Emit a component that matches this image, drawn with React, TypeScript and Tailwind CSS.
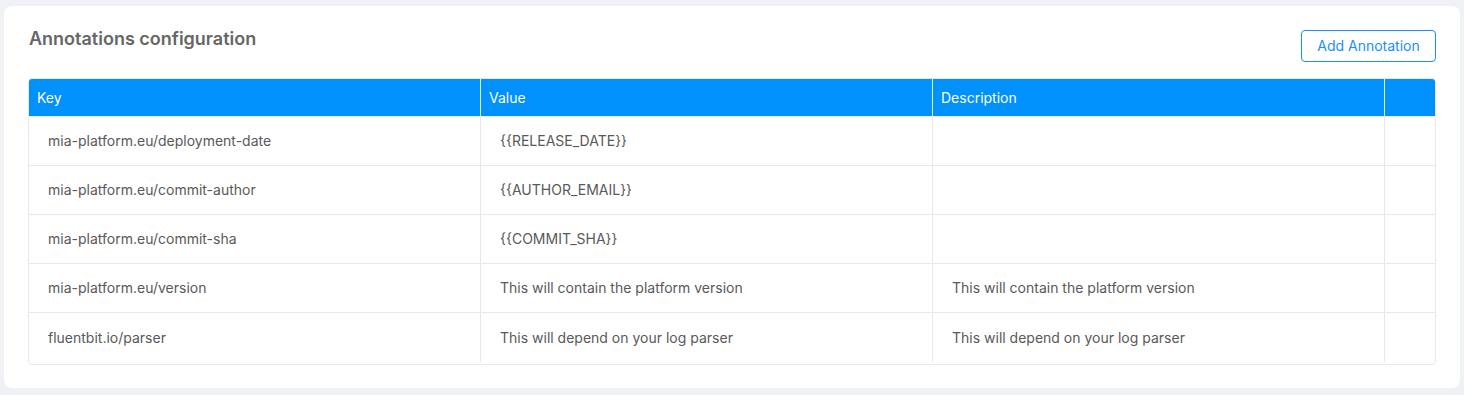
import React from "react";

type Row = { key: string; value: string; description: string };

const rows: Row[] = [
  { key: "mia-platform.eu/deployment-date", value: "{{RELEASE_DATE}}", description: "" },
  { key: "mia-platform.eu/commit-author", value: "{{AUTHOR_EMAIL}}", description: "" },
  { key: "mia-platform.eu/commit-sha", value: "{{COMMIT_SHA}}", description: "" },
  {
    key: "mia-platform.eu/version",
    value: "This will contain the platform version",
    description: "This will contain the platform version",
  },
  {
    key: "fluentbit.io/parser",
    value: "This will depend on your log parser",
    description: "This will depend on your log parser",
  },
];

const cols = "grid grid-cols-[452px_452px_452px_1fr]";

export default function App() {
  return (
    <div
      className="h-[395px] bg-[#f0f1f5] pt-[6px] pl-[4px] pr-[4px]"
      style={{ fontFamily: "Inter, 'Noto Sans', sans-serif" }}
    >
      <div className="h-[382px] rounded-lg bg-white pl-[24px] pr-[24px]">
        <div className="flex items-start justify-between">
          <h2 className="ml-[1px] mt-[21px] text-[18px] font-semibold leading-6 text-[#666666]">
            Annotations configuration
          </h2>
          <button className="mt-[24px] flex h-[32px] w-[135px] items-center justify-center rounded border border-[#1890ff] text-sm text-[#1890ff]">
            Add Annotation
          </button>
        </div>

        <div className="mt-[16px] overflow-hidden rounded border border-[#e8e8e8]">
          <div className={`${cols} h-[37px] bg-[#0091fd] text-sm text-white`}>
            {["Key", "Value", "Description", ""].map((h, i) => (
              <div
                key={i}
                className={`flex items-center pl-[8px] ${i < 3 ? "border-r border-[#e8e8e8]" : ""}`}
              >
                {h}
              </div>
            ))}
          </div>
          <div className="pb-[2px]">
            {rows.map((r, i) => (
              <div
                key={r.key}
                className={`${cols} text-sm text-[#595959] ${
                  i < rows.length - 1 ? "border-b border-[#e8e8e8]" : ""
                } ${i === 0 ? "h-[50px] border-t border-[#e8e8e8]" : "h-[49px]"}`}
              >
                <div className="flex items-center border-r border-[#e8e8e8] pl-[19px]">{r.key}</div>
                <div className="flex items-center border-r border-[#e8e8e8] pl-[19px]">{r.value}</div>
                <div className="flex items-center border-r border-[#e8e8e8] pl-[19px]">{r.description}</div>
                <div />
              </div>
            ))}
          </div>
        </div>
      </div>
    </div>
  );
}
